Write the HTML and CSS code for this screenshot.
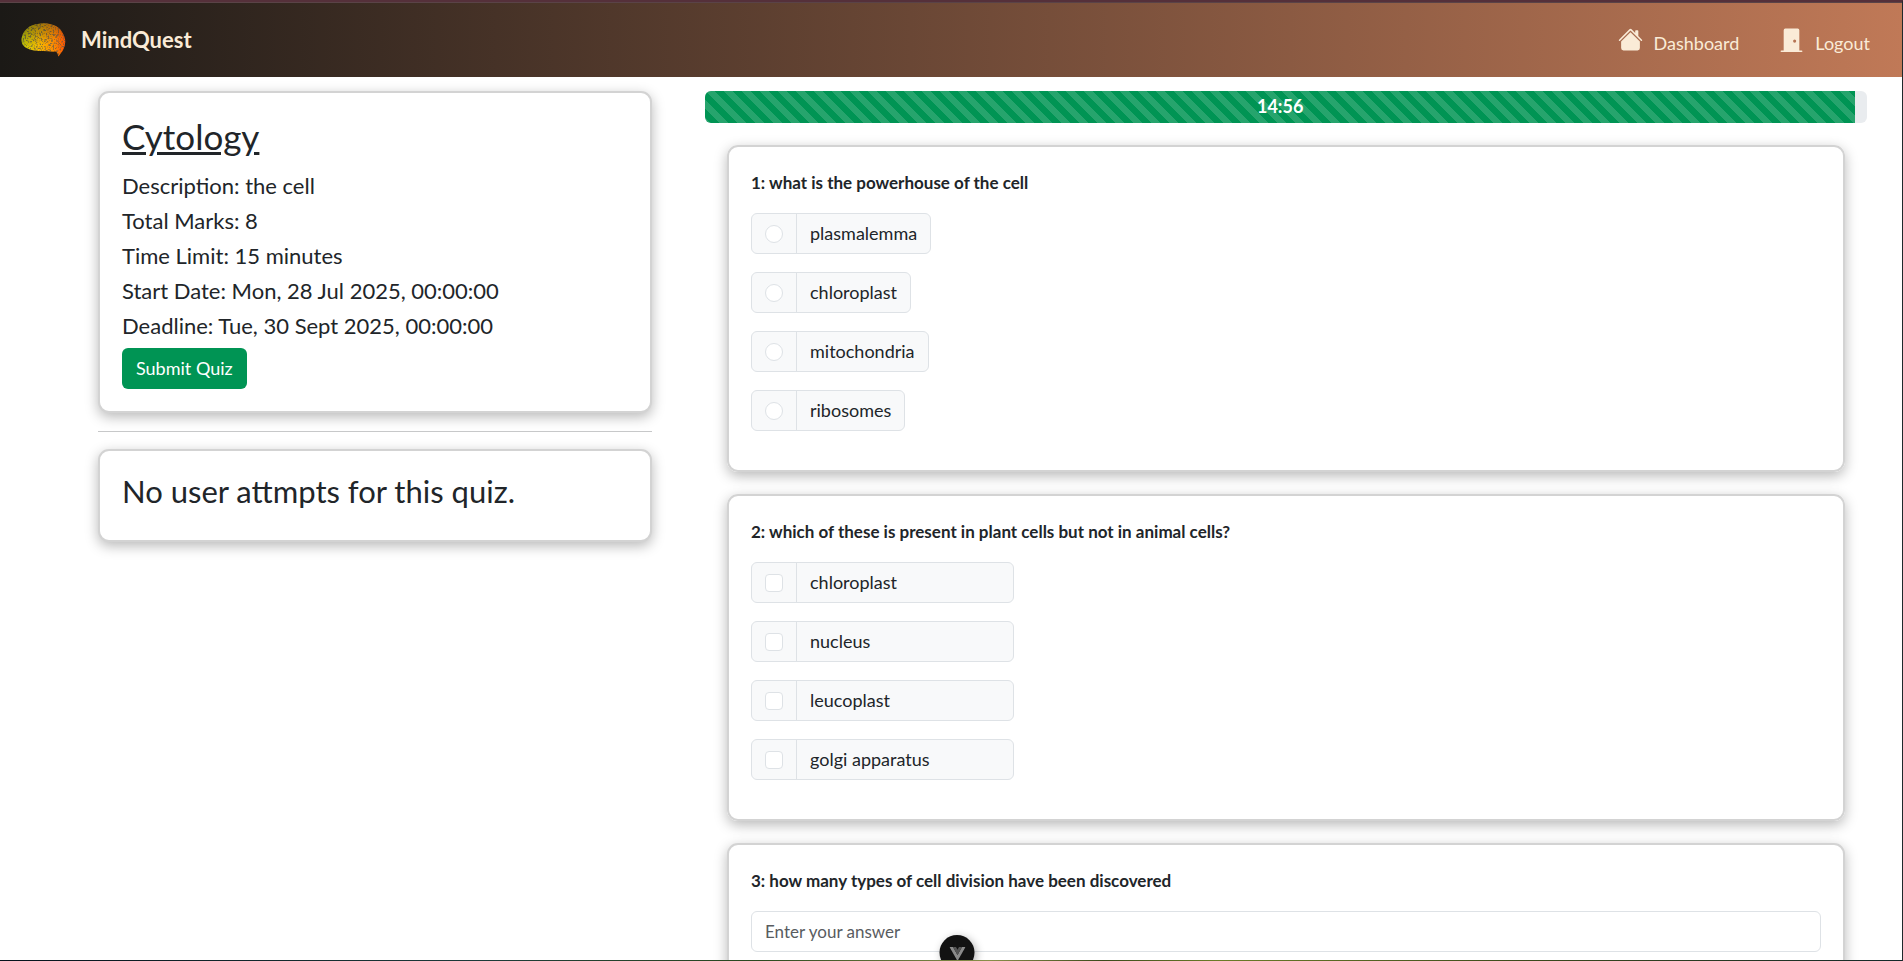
FILE: index.html
```html
<!DOCTYPE html>
<html lang="en">
<head>
<meta charset="utf-8">
<meta name="viewport" content="width=device-width, initial-scale=1">
<title>MindQuest</title>
<link rel="stylesheet" href="styles.css">
</head>
<body>
<div class="frame">
  <header class="navbar">
    <a class="brand" href="#">
      <svg class="brand-logo" viewBox="0 0 44 34" aria-hidden="true">
        <defs>
          <linearGradient id="brain" x1="0" y1="0" x2="1" y2="0">
            <stop offset="0" stop-color="#c8d000"/>
            <stop offset=".4" stop-color="#f5b800"/>
            <stop offset=".75" stop-color="#ff8a00"/>
            <stop offset="1" stop-color="#ff5200"/>
          </linearGradient>
          <linearGradient id="shade" x1="0" y1="0" x2=".3" y2="1">
            <stop offset="0" stop-color="#1e1a15" stop-opacity=".5"/>
            <stop offset=".7" stop-color="#1e1a15" stop-opacity="0"/>
          </linearGradient>
          <filter id="grain" x="0" y="0" width="1" height="1">
            <feTurbulence type="fractalNoise" baseFrequency=".6" numOctaves="2" seed="4"/>
            <feColorMatrix values="0 0 0 0 .11  0 0 0 0 .1  0 0 0 0 .08  5 0 0 0 -2.4"/>
            <feComposite in2="SourceGraphic" operator="in"/>
          </filter>
        </defs>
        <path id="brain-shape" fill="url(#brain)" d="M0 16C1 8 8 1 18 .7 22-.3 27 .2 30 1.600 37 3 42 9 43.500 16 44.500 22 42 27 39.500 30L37 33.500C36 31 36 29 34 28.500 30 29 26 28 22 28 15 28 9 27.500 5 25 1 23 0 20 0 16z"/>
        <use href="#brain-shape" filter="url(#grain)" opacity=".7"/>
        <path fill="url(#shade)" d="M0 16C1 8 8 1 18 .7 22-.3 27 .2 30 1.600 37 3 42 9 43.500 16 44.500 22 42 27 39.500 30L37 33.500C36 31 36 29 34 28.500 30 29 26 28 22 28 15 28 9 27.500 5 25 1 23 0 20 0 16z"/>
      </svg>
      <span class="brand-name">MindQuest</span>
    </a>
    <nav class="nav-links">
      <a class="nav-link" href="#">
        <svg class="nav-icon" viewBox="0 0 16 16" fill="currentColor" aria-hidden="true">
          <path d="M8.707 1.500a1 1 0 0 0-1.414 0L.646 8.146a.5.5 0 0 0 .708.708L8 2.207l6.646 6.647a.5.5 0 0 0 .708-.708L13 5.793V2.500a.5.5 0 0 0-.5-.5h-1a.5.5 0 0 0-.5.5v1.293z"/>
          <path d="m8 3.293 6 6V13.500a1.500 1.500 0 0 1-1.500 1.500h-9A1.500 1.500 0 0 1 2 13.500V9.293z"/>
        </svg>
        <span>Dashboard</span>
      </a>
      <a class="nav-link" href="#">
        <svg class="nav-icon" viewBox="0 0 16 16" fill="currentColor" aria-hidden="true">
          <path d="M12 1a1 1 0 0 1 1 1v13h1.500a.5.5 0 0 1 0 1h-13a.5.5 0 0 1 0-1H3V2a1 1 0 0 1 1-1zm-2 9a1 1 0 1 0 0-2 1 1 0 0 0 0 2"/>
        </svg>
        <span>Logout</span>
      </a>
    </nav>
  </header>

  <main class="page">
    <aside class="sidebar">
      <section class="card">
        <h1 class="quiz-title">Cytology</h1>
        <p class="quiz-meta">Description: the cell</p>
        <p class="quiz-meta">Total Marks: 8</p>
        <p class="quiz-meta">Time Limit: 15 minutes</p>
        <p class="quiz-meta">Start Date: Mon, 28 Jul 2025, 00:00:00</p>
        <p class="quiz-meta">Deadline: Tue, 30 Sept 2025, 00:00:00</p>
        <button class="submit" type="button">Submit Quiz</button>
      </section>
      <hr class="divider">
      <section class="card">
        <h2 class="attempts">No user attmpts for this quiz.</h2>
      </section>
    </aside>

    <div class="questions">
      <div class="progress" role="progressbar" aria-label="Time left" aria-valuenow="99" aria-valuemin="0" aria-valuemax="100">
        <div class="progress-bar" style="width: 99%">14:56</div>
      </div>

      <fieldset class="card question">
        <legend class="question-text">1: what is the powerhouse of the cell</legend>
        <div class="options">
          <label class="option"><span class="option-mark"><input class="check round" type="radio" name="q1"></span><span class="option-text">plasmalemma</span></label>
          <label class="option"><span class="option-mark"><input class="check round" type="radio" name="q1"></span><span class="option-text">chloroplast</span></label>
          <label class="option"><span class="option-mark"><input class="check round" type="radio" name="q1"></span><span class="option-text">mitochondria</span></label>
          <label class="option"><span class="option-mark"><input class="check round" type="radio" name="q1"></span><span class="option-text">ribosomes</span></label>
        </div>
      </fieldset>

      <fieldset class="card question">
        <legend class="question-text">2: which of these is present in plant cells but not in animal cells?</legend>
        <div class="options options-even">
          <label class="option"><span class="option-mark"><input class="check" type="checkbox"></span><span class="option-text">chloroplast</span></label>
          <label class="option"><span class="option-mark"><input class="check" type="checkbox"></span><span class="option-text">nucleus</span></label>
          <label class="option"><span class="option-mark"><input class="check" type="checkbox"></span><span class="option-text">leucoplast</span></label>
          <label class="option"><span class="option-mark"><input class="check" type="checkbox"></span><span class="option-text">golgi apparatus</span></label>
        </div>
      </fieldset>

      <section class="card question">
        <label class="question-text" for="q3">3: how many types of cell division have been discovered</label>
        <input class="answer" id="q3" type="text" placeholder="Enter your answer">
      </section>
    </div>
  </main>

  <button class="devtools" type="button" aria-label="Toggle devtools">
    <svg class="devtools-icon" viewBox="0 0 16 14" aria-hidden="true">
      <path fill="#8a8a8a" d="M0 0h3.500L8 8l4.500-8H16L8 14z"/>
      <path fill="#555" d="M3.500 0H6.500L8 2.700 9.500 0h3L8 8z"/>
    </svg>
  </button>
  <div class="bottom-edge"></div>
</div>
</body>
</html>
```
FILE: styles.css
```css
* { box-sizing: border-box; }

body {
  margin: 0;
  background: #fff;
  color: #212529;
  font-family: Lato, "Open Sans", sans-serif;
  font-size: 17px;
  line-height: 27px;
}

.frame {
  position: relative;
  display: flex;
  flex-direction: column;
  height: 100vh;
  overflow: hidden;
  border-top: 2px solid #55303a;
  border-right: 1px solid #20292c;
}

.navbar {
  display: flex;
  flex: none;
  align-items: center;
  justify-content: space-between;
  height: 75px;
  padding: 0 32px 0 21px;
  border-top: 1px solid #5a4347;
  background: linear-gradient(to right, #1b1916, #c07957);
  color: #faebd7;
}

.brand {
  display: flex;
  align-items: center;
  gap: 15px;
  color: inherit;
  font-size: 22px;
  font-weight: 700;
  text-decoration: none;
}

.brand-logo { width: 45px; height: 34px; }
.brand-name { padding-bottom: 2px; }

.nav-links { display: flex; gap: 40px; }

.nav-link {
  display: flex;
  align-items: center;
  gap: 11px;
  padding-top: 6px;
  color: inherit;
  font-size: 18px;
  text-decoration: none;
}

.nav-icon { width: 25px; height: 25px; margin-bottom: 8px; }

.page {
  display: flex;
  flex: 1;
  min-height: 0;
  gap: 53px;
  padding: 14px 35px 0 98px;
}

.sidebar { flex: 554 1 0; min-width: 0; }
.questions { flex: 1162 1 0; min-width: 0; }

.card {
  margin: 0;
  padding: 22px;
  border: 2px solid #d3d3d3;
  border-radius: 11px;
  background: #fff;
  box-shadow: 0 4px 13px rgba(0, 0, 0, .28);
}

.quiz-title {
  margin: 0 0 11px;
  font-size: 35px;
  font-weight: 400;
  line-height: 42px;
  text-decoration: underline;
}

.quiz-meta { margin: 0; font-size: 22px; line-height: 35px; }

.submit {
  display: block;
  height: 41px;
  margin-top: 5px;
  padding: 0 14px;
  border: 0;
  border-radius: 6px;
  background: #009454;
  color: #fff;
  font: inherit;
  font-size: 18px;
}

.divider {
  height: 1px;
  margin: 18px 0 17px;
  border: 0;
  background: #c7c8c9;
}

.attempts {
  margin: 0 0 9px;
  font-size: 31px;
  font-weight: 400;
  line-height: 36px;
}

.progress {
  display: flex;
  height: 32px;
  overflow: hidden;
  border-radius: 6px;
  background: #e9ecef;
}

.progress-bar {
  background: linear-gradient(45deg, rgba(255, 255, 255, .15) 25%, transparent 25%, transparent 50%, rgba(255, 255, 255, .15) 50%, rgba(255, 255, 255, .15) 75%, transparent 75%) 0 0 / 18px 18px #009454;
  color: #fff;
  font-size: 18px;
  font-weight: 700;
  line-height: 31px;
  text-align: center;
}

.question {
  display: flow-root;
  min-width: 0;
  margin: 22px 22px 0;
}

.question-text {
  display: block;
  float: left;
  width: 100%;
  margin-bottom: 17px;
  padding: 0;
  font-weight: 700;
}

.options {
  display: flex;
  flex-direction: column;
  align-items: flex-start;
  gap: 18px;
  clear: both;
  padding-bottom: 17px;
}

.options-even { align-items: stretch; width: 263px; }

.option {
  display: flex;
  height: 41px;
  border: 1px solid #dee2e6;
  border-radius: 6px;
  background: #f8f9fa;
}

.option-mark {
  display: flex;
  align-items: center;
  padding: 0 13px;
  border-right: 1px solid #dee2e6;
}

.option-text { padding: 6px 13px; font-size: 18px; }

.check {
  width: 18px;
  height: 18px;
  margin: 0;
  border: 1px solid #dee2e6;
  border-radius: 4px;
  background: #fff;
  appearance: none;
}

.check.round { border-radius: 50%; }
.check:checked { background: #009454; }

.answer {
  display: block;
  width: 100%;
  height: 41px;
  padding: 0 13px;
  border: 1px solid #dee2e6;
  border-radius: 6px;
  background: #fff;
  color: inherit;
  font: inherit;
}

.answer::placeholder { color: #595c5f; opacity: 1; }

.devtools {
  position: absolute;
  bottom: -9px;
  left: calc(50% + 6px);
  width: 35px;
  height: 35px;
  padding: 5px 0 0;
  border: 0;
  border-radius: 50%;
  background: #121212;
  box-shadow: 2px 2px 8px rgba(0, 0, 0, .3);
  transform: translateX(-50%);
}

.devtools-icon { width: 16px; height: 14px; }

.bottom-edge {
  position: relative;
  flex: none;
  height: 1px;
  background: linear-gradient(to right, #06121c, #1c3a3a 25%, #2c4a20 40%, #8a8f4a 52%, #3c4a1c 58%, #6c7c28 64%, #3c4a1c 80%, #14282a);
}
```
